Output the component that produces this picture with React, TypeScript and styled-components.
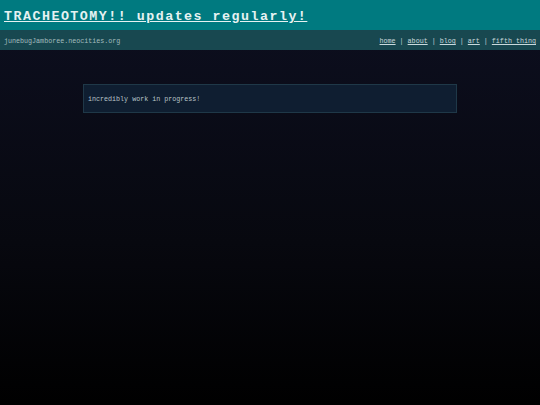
import React from 'react';
import styled, { createGlobalStyle } from 'styled-components';

const GlobalStyle = createGlobalStyle`
  html, body {
    margin: 0;
    padding: 0;
  }
  body {
    min-height: 405px;
    background: linear-gradient(to bottom, #0d0f20 0%, #07080f 60%, #000000 100%);
    font-family: "Liberation Mono", "Courier New", monospace;
  }
`;

const Page = styled.div`
  min-height: 405px;
  display: flex;
  flex-direction: column;
`;

const Header = styled.header`
  height: 30px;
  background: #007a80;
  display: flex;
  align-items: center;
  padding: 0 4px;
  box-sizing: border-box;
`;

const Title = styled.a`
  color: #e6f2f2;
  font-weight: bold;
  font-size: 13.3px;
  letter-spacing: 1.5px;
  text-decoration: underline;
  margin-top: 3px;
`;

const SubBar = styled.nav`
  height: 20px;
  background: #184850;
  display: flex;
  align-items: center;
  justify-content: space-between;
  padding: 2px 4px 0 4px;
  box-sizing: border-box;
  font-size: 6.7px;
`;

const Site = styled.span`
  color: #a3bcbf;
`;

const Links = styled.div`
  display: flex;
  align-items: center;
  gap: 4px;
  color: #c9d9dc;
`;

const NavLink = styled.a`
  color: #c9d9dc;
  text-decoration: underline;
`;

const Sep = styled.span`
  color: #c0d0d2;
`;

const Main = styled.main`
  padding-top: 34px;
  display: flex;
  justify-content: center;
`;

const Box = styled.section`
  width: 374px;
  height: 29px;
  box-sizing: border-box;
  background: #0f1e31;
  border: 1px solid #1f3848;
  display: flex;
  align-items: center;
  padding: 1px 4px 0 4px;
  font-size: 6.7px;
  color: #b9c4c8;
`;

const links = ['home', 'about', 'blog', 'art', 'fifth thing'];

export default function App() {
  return (
    <>
      <GlobalStyle />
      <Page>
        <Header>
          <Title href="#">TRACHEOTOMY!! updates regularly!</Title>
        </Header>
        <SubBar>
          <Site>junebugJamboree.neocities.org</Site>
          <Links>
            {links.map((l, i) => (
              <React.Fragment key={l}>
                {i > 0 && <Sep>|</Sep>}
                <NavLink href="#">{l}</NavLink>
              </React.Fragment>
            ))}
          </Links>
        </SubBar>
        <Main>
          <Box>incredibly work in progress!</Box>
        </Main>
      </Page>
    </>
  );
}
